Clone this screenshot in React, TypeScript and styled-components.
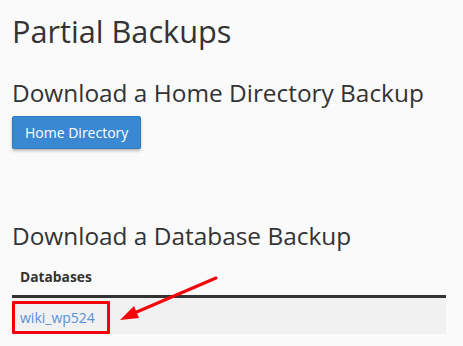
import styled, { createGlobalStyle } from "styled-components";

const Global = createGlobalStyle`
  html, body {
    margin: 0;
    padding: 0;
    background: #fafafa;
  }
  body {
    font-family: "Open Sans", "Liberation Sans", sans-serif;
    color: #333;
  }
`;

const Page = styled.div`
  padding: 11px 17px 0 12px;
`;

const Title = styled.h1`
  font-size: 30.7px;
  font-weight: 400;
  line-height: 40px;
  margin: 0 0 27px;
`;

const SectionTitle = styled.h2<{ gap?: number }>`
  font-size: 24.4px;
  font-weight: 400;
  line-height: 30px;
  margin: 0 0 ${(p) => p.gap ?? 8}px;
`;

const PrimaryButton = styled.button`
  font-family: inherit;
  font-size: 14px;
  color: #fff;
  background: #3a88d2;
  border: 1px solid #2f79c0;
  border-radius: 2px;
  height: 33px;
  padding: 0 12px;
  box-shadow: 0 2px 3px rgba(0, 0, 0, 0.25);
  margin-bottom: 72px;
`;

const Table = styled.table`
  width: 100%;
  border-collapse: collapse;
  font-size: 14px;
`;

const HeadCell = styled.th`
  text-align: left;
  font-weight: 700;
  font-size: 13.8px;
  padding: 0 8px 9px;
  border-bottom: 3px solid #333;
  line-height: 19px;
`;

const Row = styled.tr`
  background: #f1f1f1;
`;

const Cell = styled.td`
  padding: 0;
  height: 36px;
`;

const Marked = styled.span`
  display: inline-flex;
  align-items: center;
  box-sizing: border-box;
  height: 33px;
  margin-top: 3px;
  padding: 0 12px 0 5px;
  border: 3px solid #f2040b;
  border-radius: 1px;
`;

const DbLink = styled.a`
  color: #5b90d6;
  text-decoration: none;
  font-size: 14px;
`;

const Wrap = styled.div`
  position: relative;
`;

const Arrow = styled.svg`
  position: absolute;
  left: 0;
  top: 0;
  pointer-events: none;
`;

export default function App() {
  return (
    <>
      <Global />
      <Wrap>
        <Page>
          <Title>Partial Backups</Title>
          <SectionTitle>Download a Home Directory Backup</SectionTitle>
          <PrimaryButton>Home Directory</PrimaryButton>
          <SectionTitle gap={16}>Download a Database Backup</SectionTitle>
          <Table>
            <thead>
              <tr>
                <HeadCell>Databases</HeadCell>
              </tr>
            </thead>
            <tbody>
              <Row>
                <Cell>
                  <Marked>
                    <DbLink href="#">wiki_wp524</DbLink>
                  </Marked>
                </Cell>
              </Row>
            </tbody>
          </Table>
        </Page>
        <Arrow width="463" height="346" viewBox="0 0 463 346">
          <line x1="216" y1="278" x2="132" y2="314" stroke="#f2040b" strokeWidth="3" strokeLinecap="round" />
          <polygon points="120,320 134,306 139,318" fill="#f2040b" />
        </Arrow>
      </Wrap>
    </>
  );
}
